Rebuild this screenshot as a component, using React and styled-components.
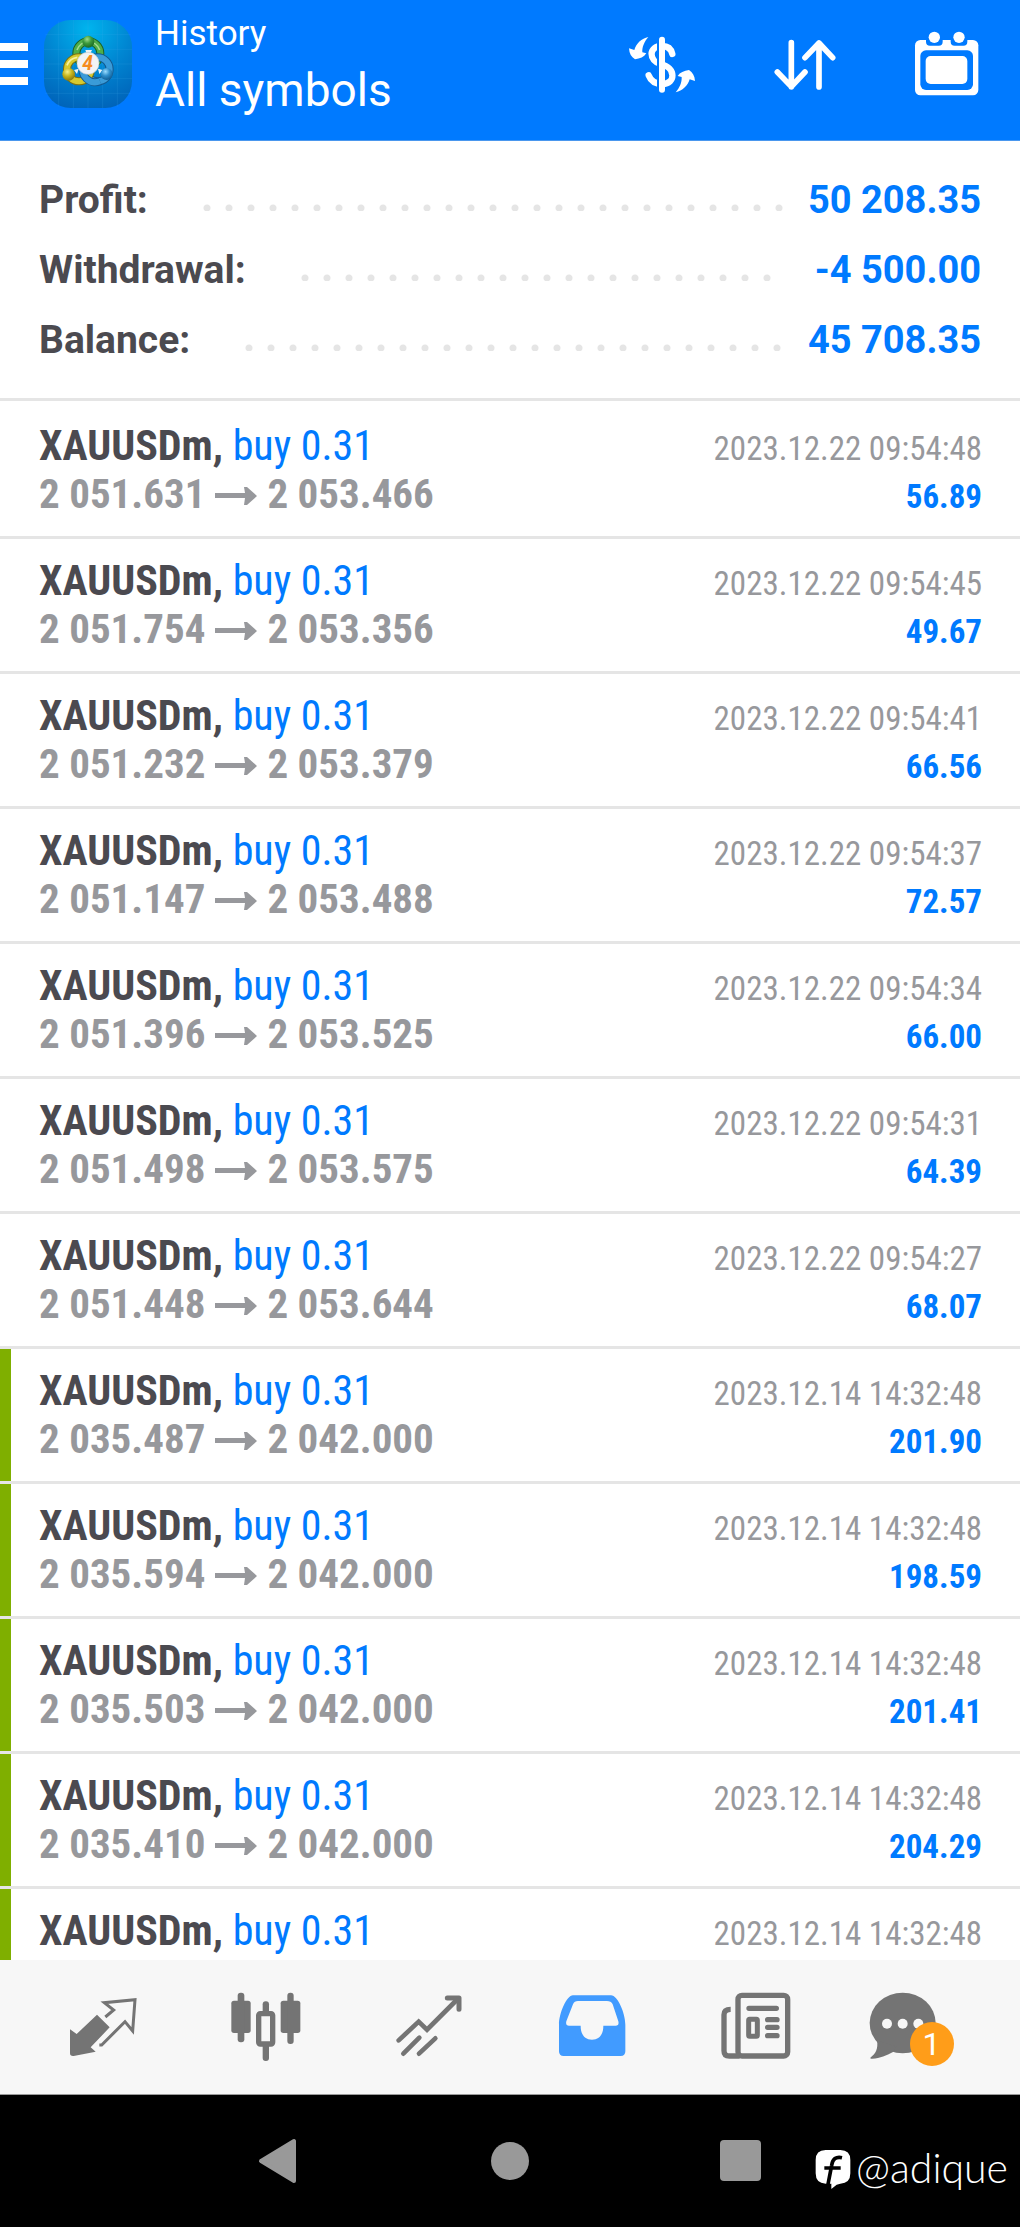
import React from 'react';
import styled, { createGlobalStyle } from 'styled-components';

const GlobalStyle = createGlobalStyle`
    * {
        box-sizing: border-box;
    }

    body {
        margin: 0;
        background: #fff;
        font-family: Roboto, "Liberation Sans", sans-serif;
    }

    button {
        border: 0;
        padding: 0;
        background: none;
        font: inherit;
        color: inherit;
        cursor: pointer;
    }
`;

const Screen = styled.div`
    display: flex;
    flex-direction: column;
    height: 100vh;
    overflow: hidden;
`;

const Header = styled.header`
    display: flex;
    align-items: center;
    flex: none;
    padding: 0 3px 12px 0;
    border-bottom: 1px solid #4a97ee;
    background: #007aff;
    color: #fff;
`;

const MenuButton = styled.button`
    display: flex;
    flex-direction: column;
    gap: 9px;
    width: 28px;
    margin-right: 16px;
`;

const MenuBar = styled.span`
    height: 8px;
    background: #fff;
`;

const Titles = styled.div`
    flex: 1;
    padding: 12px 0 4px 23px;
`;

const Caption = styled.div`
    font-size: 35px;
    line-height: 44px;
`;

const Title = styled.h1`
    margin: 0;
    font-size: 46px;
    font-weight: 400;
    line-height: 68px;
`;

const HeaderButton = styled.button`
    display: flex;
    align-items: center;
    justify-content: center;
    width: 142px;
    height: 126px;
`;

const Icon = styled.svg`
    display: block;
    flex: none;
    width: ${props => props.$size}px;
    height: ${props => props.$size}px;
    overflow: visible;
`;

const Summary = styled.dl`
    flex: none;
    margin: 0;
    padding: 24px 39px 23px;
    border-bottom: 3px solid #e5e5e5;
    font-size: 39px;
    font-weight: 700;
    line-height: 70px;
`;

const SummaryRow = styled.div`
    display: flex;
    align-items: center;
`;

const SummaryLabel = styled.dt`
    color: #4b4a50;
`;

const Dots = styled.span`
    flex: 1;
    height: 7px;
    margin: 14px 0 0 55px;
    background: radial-gradient(circle at 4px 4px, #e5e5e5 3px, transparent 4px) 0 0 / 22px 7px repeat-x;
`;

const SummaryValue = styled.dd`
    min-width: 198px;
    margin: 0;
    color: #007aff;
    font-size: 38px;
    text-align: right;
`;

const Deals = styled.ul`
    flex: 1;
    min-height: 0;
    margin: 0;
    padding: 0;
    overflow: hidden;
    list-style: none;
    font-family: "Roboto Condensed", "Liberation Sans Narrow", Roboto, sans-serif;
`;

const Deal = styled.li`
    display: flex;
    height: 135px;
    border-top: 3px solid #e5e5e5;

    &:first-child {
        border-top-color: #fff;
    }
`;

const Marker = styled.span`
    width: 11px;
    background: ${props => (props.$target ? '#7faf00' : 'transparent')};
`;

const DealBody = styled.div`
    flex: 1;
    padding: 18px 38px 0 28px;
`;

const Line = styled.div`
    display: flex;
    align-items: baseline;
    justify-content: space-between;
    height: 48px;
    font-size: 42px;
    line-height: 48px;
`;

const Symbol = styled.strong`
    color: #4b4a50;
`;

const Volume = styled.span`
    color: #007aff;
`;

const Prices = styled.strong`
    color: #97989c;
    font-size: 41px;
`;

const Arrow = styled.svg`
    width: 42px;
    height: 24px;
    margin: 0 10px;
`;

const Time = styled.time`
    color: #97989c;
    font-size: 33px;
    line-height: 40px;
`;

const Profit = styled.strong`
    color: #007aff;
    font-size: 33px;
    line-height: 40px;
`;

const TabBar = styled.nav`
    display: flex;
    flex: none;
    padding: 0 22px 0 20px;
    border-bottom: 1px solid #9a9a9a;
    background: #f7f7f7;
    color: #747474;
`;

const Tab = styled.button`
    display: flex;
    align-items: center;
    justify-content: center;
    flex: 1;
    height: 134px;
    color: ${props => (props.$active ? '#419bff' : '#747474')};
`;

const TabIcon = styled.span`
    position: relative;
`;

const Badge = styled.span`
    position: absolute;
    top: 40px;
    left: 38px;
    width: 44px;
    height: 44px;
    border-radius: 50%;
    background: #ff9d19;
    color: #fff;
    font-size: 32px;
    line-height: 44px;
    text-align: center;
`;

const SystemBar = styled.footer`
    position: relative;
    display: flex;
    justify-content: center;
    flex: none;
    background: #000;
    color: #999;
`;

const SystemButton = styled.button`
    display: flex;
    align-items: center;
    justify-content: center;
    width: 231px;
    height: 132px;
`;

const Handle = styled.a`
    position: absolute;
    right: 12px;
    bottom: 35px;
    display: flex;
    align-items: center;
    gap: 5px;
    color: #fff;
    font-family: Lato, sans-serif;
    font-size: 41px;
    font-weight: 300;
    line-height: 48px;
    text-decoration: none;
`;

const totals = [
    { label: 'Profit:', value: '50 208.35' },
    { label: 'Withdrawal:', value: '-4 500.00' },
    { label: 'Balance:', value: '45 708.35' },
];

const deals = [
    { open: '2 051.631', close: '2 053.466', time: '2023.12.22 09:54:48', profit: '56.89' },
    { open: '2 051.754', close: '2 053.356', time: '2023.12.22 09:54:45', profit: '49.67' },
    { open: '2 051.232', close: '2 053.379', time: '2023.12.22 09:54:41', profit: '66.56' },
    { open: '2 051.147', close: '2 053.488', time: '2023.12.22 09:54:37', profit: '72.57' },
    { open: '2 051.396', close: '2 053.525', time: '2023.12.22 09:54:34', profit: '66.00' },
    { open: '2 051.498', close: '2 053.575', time: '2023.12.22 09:54:31', profit: '64.39' },
    { open: '2 051.448', close: '2 053.644', time: '2023.12.22 09:54:27', profit: '68.07' },
    { open: '2 035.487', close: '2 042.000', time: '2023.12.14 14:32:48', profit: '201.90', target: true },
    { open: '2 035.594', close: '2 042.000', time: '2023.12.14 14:32:48', profit: '198.59', target: true },
    { open: '2 035.503', close: '2 042.000', time: '2023.12.14 14:32:48', profit: '201.41', target: true },
    { open: '2 035.410', close: '2 042.000', time: '2023.12.14 14:32:48', profit: '204.29', target: true },
    // only the first line of this one shows above the tabs
    { open: '', close: '', time: '2023.12.14 14:32:48', profit: '', target: true },
];

const AppLogo = () => (
    <Icon $size={88} viewBox="132 60 264 264" aria-hidden="true">
        <defs>
            <radialGradient id="logoBg" cx="0.5" cy="0.1" r="0.95">
                <stop offset="0" stopColor="#00b4ee" />
                <stop offset="0.5" stopColor="#0086d2" />
                <stop offset="1" stopColor="#0062b8" />
            </radialGradient>
            <radialGradient id="greenHead" cx="0.4" cy="0.3" r="0.7">
                <stop offset="0" stopColor="#9fdc8b" />
                <stop offset="0.5" stopColor="#3c9a3c" />
                <stop offset="1" stopColor="#1d6b26" />
            </radialGradient>
            <radialGradient id="yellowHead" cx="0.4" cy="0.3" r="0.7">
                <stop offset="0" stopColor="#f6f08a" />
                <stop offset="0.5" stopColor="#c6b51d" />
                <stop offset="1" stopColor="#8a7a10" />
            </radialGradient>
            <radialGradient id="blueHead" cx="0.4" cy="0.3" r="0.7">
                <stop offset="0" stopColor="#9adcff" />
                <stop offset="0.5" stopColor="#2f8fcc" />
                <stop offset="1" stopColor="#125f96" />
            </radialGradient>
        </defs>
        <rect x="132" y="60" width="264" height="264" rx="80" fill="url(#logoBg)" />
        <path d="M176 64V320M220 60V324M264 60V324M308 60V324M352 64V320M136 104H392M132 148H396M132 192H396M132 236H396M136 280H392" stroke="#3aa9ea" strokeOpacity="0.28" strokeWidth="2" />
        <g fill="none">
            <circle cx="265" cy="160" r="36" stroke="#1c6124" strokeWidth="24" />
            <circle cx="265" cy="160" r="36" stroke="#4fae4a" strokeWidth="18" />
            <path d="M231 150A36 36 0 0 1 299 150" stroke="#a3db8f" strokeWidth="5" />
            <circle cx="293" cy="208" r="36" stroke="#14598f" strokeWidth="24" />
            <circle cx="293" cy="208" r="36" stroke="#3a9bd8" strokeWidth="18" />
            <path d="M262 224A36 36 0 0 0 300 244" stroke="#a4dcf8" strokeWidth="5" />
            <circle cx="237" cy="208" r="36" stroke="#7c7010" strokeWidth="24" />
            <circle cx="237" cy="208" r="36" stroke="#d6c92e" strokeWidth="18" />
            <path d="M201 196A38 38 0 0 1 232 172" stroke="#f6f1a0" strokeWidth="5" />
            <path d="M250 196A38 38 0 0 0 300 244" stroke="#14598f" strokeWidth="24" />
            <path d="M250 196A38 38 0 0 0 300 244" stroke="#3a9bd8" strokeWidth="18" />
        </g>
        <path d="M256 150H276L270 162H260ZM222 210L236 206L231 222ZM294 206L308 210L298 222Z" fill="#e9f3f7" />
        <circle cx="265" cy="125" r="18" fill="url(#greenHead)" />
        <circle cx="206" cy="223" r="19" fill="url(#yellowHead)" />
        <circle cx="320" cy="222" r="18" fill="url(#blueHead)" />
        <circle cx="264" cy="190" r="33" fill="#f3f3f5" stroke="#c9cdd2" strokeWidth="2" />
        <text x="263" y="210" fill="#f58c1f" fontFamily="Roboto, sans-serif" fontSize="58" fontStyle="italic" fontWeight="700" textAnchor="middle">4</text>
    </Icon>
);

const DollarIcon = () => (
    <Icon $size={72} viewBox="78 81 216 216" aria-hidden="true">
        <path d="M217 159C213 141 200 135 186 135C144 135 146 180 182 189C230 200 226 249 188 249C166 249 152 239 146 223" fill="none" stroke="#fff" strokeWidth="19" strokeLinecap="round" />
        <path d="M174 110V275" stroke="#007aff" strokeWidth="6" />
        <path d="M186 116V266" stroke="#fff" strokeWidth="18" strokeLinecap="round" />
        <path id="turn" d="M145 108C125 112 108 128 103 147L87 142C88 158 94 168 105 175C120 173 132 168 139 157L127 154C126 138 133 122 145 108Z" fill="#fff" />
        <use href="#turn" transform="rotate(180 186 191)" />
    </Icon>
);

const SortIcon = () => (
    <Icon $size={72} viewBox="504 81 216 216" aria-hidden="true">
        <path d="M574 125V257M532 213L574 257L615 213M657 258V126M615 170L657 126L698 170" fill="none" stroke="#fff" strokeWidth="17" strokeLinecap="round" strokeLinejoin="round" />
    </Icon>
);

const CalendarIcon = () => (
    <Icon $size={72} viewBox="930 81 216 216" aria-hidden="true">
        <rect x="945" y="117" width="190" height="166" rx="16" fill="#fff" />
        <rect x="961" y="148" width="158" height="119" rx="17" fill="#007aff" />
        <rect x="977" y="165" width="125" height="84" rx="15" fill="#fff" />
        <path d="M978 112H1028V122Q1028 134 1016 134H990Q978 134 978 122ZM1052 112H1102V122Q1102 134 1090 134H1064Q1052 134 1052 122Z" fill="#007aff" />
        <circle cx="1003" cy="109" r="17" fill="#fff" />
        <circle cx="1077" cy="109" r="17" fill="#fff" />
    </Icon>
);

const QuotesIcon = () => (
    <Icon $size={90} viewBox="172 366 270 270" aria-hidden="true">
        <path d="M211 508L231 522L292 464L330 502L273 562L288 575L222 588Q211 589 211 580Z" fill="currentColor" />
        <path d="M317 471L342 450L314 428L406 419L399 513L376 485L306 555H299" fill="none" stroke="currentColor" strokeWidth="9" />
    </Icon>
);

const ChartIcon = () => (
    <Icon $size={90} viewBox="661 366 270 270" aria-hidden="true">
        <g fill="currentColor">
            <rect x="695" y="422" width="58" height="97" rx="8" />
            <rect x="714" y="398" width="20" height="149" rx="9" />
            <rect x="843" y="422" width="59" height="97" rx="8" />
            <rect x="863" y="398" width="19" height="154" rx="9" />
            <rect x="789" y="424" width="19" height="40" rx="9" />
            <rect x="789" y="550" width="19" height="53" rx="9" />
        </g>
        <rect x="777" y="461" width="42" height="91" rx="5" fill="#f7f7f7" stroke="currentColor" strokeWidth="16" />
    </Icon>
);

const TradeIcon = () => (
    <Icon $size={90} viewBox="1150 366 270 270" aria-hidden="true">
        <g fill="none" stroke="currentColor" strokeWidth="14" strokeLinecap="round">
            <path d="M1197 541L1257 485L1282 509L1374 417" />
            <path d="M1343 414H1378V448" strokeWidth="15" strokeLinejoin="round" />
            <path d="M1211 581L1259 533M1258 581L1307 535" />
        </g>
    </Icon>
);

const HistoryIcon = () => (
    <Icon $size={90} viewBox="109 366 270 270" aria-hidden="true">
        <path
            fill="currentColor"
            fillRule="evenodd"
            d="M190 406H304C324 406 347 460 347 494V574Q347 588 333 588H162Q148 588 148 574V494C148 460 171 406 190 406Z
               M205 423Q194 423 190 433L170 484Q167 497 178 497H213C213 525 226 539 247 539C268 539 281 525 281 497H318Q329 497 326 484L309 433Q304 423 292 423Z"
        />
    </Icon>
);

const NewsIcon = () => (
    <Icon $size={90} viewBox="598 366 270 270" aria-hidden="true">
        <g fill="none" stroke="currentColor" strokeWidth="16">
            <rect x="685" y="406" width="149" height="182" rx="12" />
            <path d="M663 448Q643 448 643 464V572Q643 588 659 588H690" />
            <rect x="717" y="478" width="26" height="51" rx="3" strokeWidth="15" />
            <path d="M718 445H800M774 479H802M774 502H802M774 527H802" strokeLinecap="round" />
        </g>
    </Icon>
);

const MessagesIcon = () => (
    <Icon $size={90} viewBox="1087 366 270 270" aria-hidden="true">
        <ellipse cx="1179" cy="489" rx="99" ry="91" fill="currentColor" />
        <path d="M1102 540C1106 568 1098 580 1082 593C1082 596 1084 597 1088 596C1112 595 1130 586 1150 576L1160 560Z" fill="currentColor" />
        <g fill="#f7f7f7">
            <circle cx="1132" cy="491" r="15" />
            <circle cx="1179" cy="491" r="15" />
            <circle cx="1226" cy="491" r="15" />
        </g>
    </Icon>
);

const tabs = [
    { name: 'Quotes', icon: QuotesIcon },
    { name: 'Chart', icon: ChartIcon },
    { name: 'Trade', icon: TradeIcon },
    { name: 'History', icon: HistoryIcon, active: true },
    { name: 'News', icon: NewsIcon },
    { name: 'Messages', icon: MessagesIcon, badge: 1 },
];

const DealItem = ({ deal }) => (
    <Deal>
        <Marker $target={deal.target} />
        <DealBody>
            <Line>
                <span>
                    <Symbol>XAUUSDm,</Symbol> <Volume>buy 0.31</Volume>
                </span>
                <Time>{deal.time}</Time>
            </Line>
            {deal.open && (
                <Line>
                    <Prices>
                        {deal.open}
                        <Arrow viewBox="0 0 42 24" aria-hidden="true">
                            <path d="M0 9H30L29 3H32L42 12L32 21H29L30 14H0Z" fill="currentColor" />
                        </Arrow>
                        {deal.close}
                    </Prices>
                    <Profit>{deal.profit}</Profit>
                </Line>
            )}
        </DealBody>
    </Deal>
);

const App = () => (
    <Screen>
        <GlobalStyle />
        <Header>
            <MenuButton aria-label="Menu">
                <MenuBar />
                <MenuBar />
                <MenuBar />
            </MenuButton>
            <AppLogo />
            <Titles>
                <Caption>History</Caption>
                <Title>All symbols</Title>
            </Titles>
            <HeaderButton aria-label="Currency"><DollarIcon /></HeaderButton>
            <HeaderButton aria-label="Sort"><SortIcon /></HeaderButton>
            <HeaderButton aria-label="Period"><CalendarIcon /></HeaderButton>
        </Header>
        <Summary>
            {totals.map(total => (
                <SummaryRow key={total.label}>
                    <SummaryLabel>{total.label}</SummaryLabel>
                    <Dots />
                    <SummaryValue>{total.value}</SummaryValue>
                </SummaryRow>
            ))}
        </Summary>
        <Deals>
            {deals.map((deal, i) => (
                <DealItem key={i} deal={deal} />
            ))}
        </Deals>
        <TabBar>
            {tabs.map(tab => (
                <Tab key={tab.name} $active={tab.active} aria-label={tab.name}>
                    <TabIcon>
                        <tab.icon />
                        {tab.badge && <Badge>{tab.badge}</Badge>}
                    </TabIcon>
                </Tab>
            ))}
        </TabBar>
        <SystemBar>
            <SystemButton aria-label="Back">
                <Icon $size={46} viewBox="0 0 46 46" aria-hidden="true">
                    <path d="M5 23L38 3V43Z" fill="currentColor" stroke="currentColor" strokeWidth="4" strokeLinejoin="round" />
                </Icon>
            </SystemButton>
            <SystemButton aria-label="Home">
                <Icon $size={46} viewBox="0 0 46 46" aria-hidden="true">
                    <circle cx="23" cy="23" r="19" fill="currentColor" />
                </Icon>
            </SystemButton>
            <SystemButton aria-label="Recent apps">
                <Icon $size={46} viewBox="0 0 46 46" aria-hidden="true">
                    <rect x="2" y="2" width="41" height="41" rx="4" fill="currentColor" />
                </Icon>
            </SystemButton>
            <Handle href="#adique">
                <Icon $size={36} viewBox="915 876 108 108" aria-hidden="true">
                    <path d="M947 876H991Q1021 876 1021 906V946Q1021 976 991 977L980 980L964 993V977H947Q917 976 917 946V906Q917 876 947 876Z" fill="#fff" />
                    <path d="M996 899Q969 893 965 922L953 984M943 930H992" fill="none" stroke="#000" strokeWidth="11" />
                </Icon>
                @adique
            </Handle>
        </SystemBar>
    </Screen>
);

export default App;
